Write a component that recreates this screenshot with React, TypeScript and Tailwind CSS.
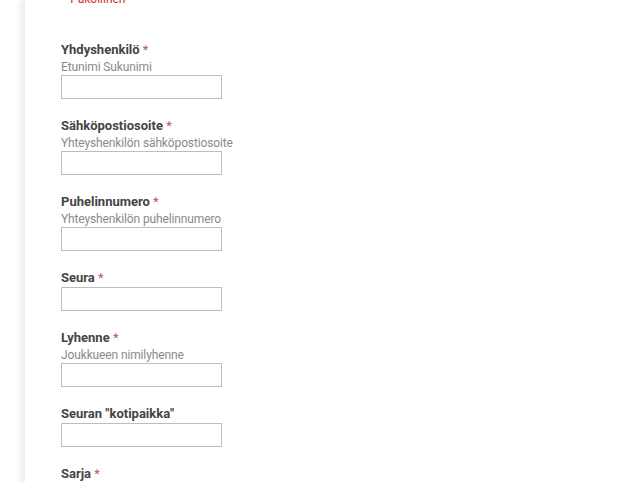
import React from "react";

type Field = {
  label: string;
  required?: boolean;
  hint?: string;
};

const fields: Field[] = [
  { label: "Yhdyshenkilö", required: true, hint: "Etunimi Sukunimi" },
  { label: "Sähköpostiosoite", required: true, hint: "Yhteyshenkilön sähköpostiosoite" },
  { label: "Puhelinnumero", required: true, hint: "Yhteyshenkilön puhelinnumero" },
  { label: "Seura", required: true },
  { label: "Lyhenne", required: true, hint: "Joukkueen nimilyhenne" },
  { label: 'Seuran "kotipaikka"' },
  { label: "Sarja", required: true },
];

const FormField = ({ field }: { field: Field }) => {
  return (
    <div className="flex flex-col">
      <label className="text-[13px] leading-[18px] font-bold text-[#444]">
        {field.label}
        {field.required && <span className="font-normal text-[#b25c5c]"> *</span>}
      </label>
      {field.hint && (
        <span className="text-[12px] leading-[16px] tracking-[-0.13px] text-[#8a8a8a]">
          {field.hint}
        </span>
      )}
      <input
        type="text"
        className="w-[161px] h-[24px] border border-[#bdbdbd] bg-white outline-none"
      />
    </div>
  );
};

const App = () => {
  return (
    <div
      className="h-[483px] overflow-hidden bg-white flex"
      style={{ fontFamily: "Roboto, 'Liberation Sans', sans-serif" }}
    >
      <div className="ml-[25px] flex-1 bg-white shadow-[-5px_0_6px_rgba(0,0,0,0.07)] pl-[36px]">
        <p className="-mt-[9px] pl-[4px] text-[12px] leading-[16px] text-[#c9302c]">*Pakollinen</p>
        <div className="mt-[34px] flex flex-col gap-[18px]">
          {fields.map((f) => (
            <FormField key={f.label} field={f} />
          ))}
        </div>
      </div>
    </div>
  );
};

export default App;
